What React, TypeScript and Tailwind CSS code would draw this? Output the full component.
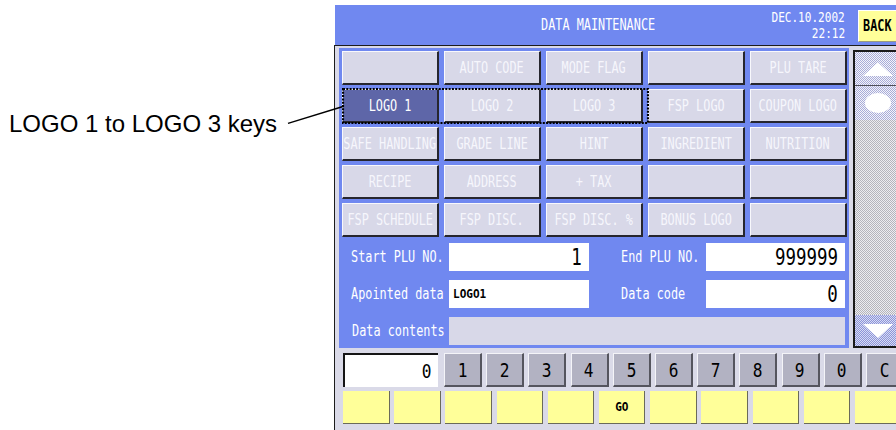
import React from "react";

const MONO = "font-['DejaVu_Sans_Mono',monospace]";

const rows: string[][] = [
  ["", "AUTO CODE", "MODE FLAG", "", "PLU TARE"],
  ["LOGO 1", "LOGO 2", "LOGO 3", "FSP LOGO", "COUPON LOGO"],
  ["SAFE HANDLING", "GRADE LINE", "HINT", "INGREDIENT", "NUTRITION"],
  ["RECIPE", "ADDRESS", "+ TAX", "", ""],
  ["FSP SCHEDULE", "FSP DISC.", "FSP DISC. %", "BONUS LOGO", ""],
];

function FuncKey({ label, selected }: { label: string; selected?: boolean }) {
  return (
    <div
      className={`h-[34px] flex items-center justify-center overflow-visible border-t border-l border-b-2 border-r-2 border-t-[#f8f8fc] border-l-[#f8f8fc] border-b-[#26262e] border-r-[#26262e] ${
        selected ? "bg-[#5e66a8] text-white" : "bg-[#d8d8e8] text-[#f6f6fc]"
      }`}
    >
      <span className={`${MONO} shrink-0 whitespace-nowrap inline-block scale-x-[0.79] origin-center text-[15px] leading-[16px]`}>
        {label}
      </span>
    </div>
  );
}

function Label({ text, pl }: { text: string; pl: string }) {
  return (
    <div className={`flex items-center ${pl}`}>
      <span className={`${MONO} whitespace-nowrap inline-block scale-x-[0.79] origin-left text-[15px] leading-[16px] text-white`}>
        {text}
      </span>
    </div>
  );
}

function NumField({ value }: { value: string }) {
  return (
    <div className="bg-white flex items-center justify-end pr-[7px] overflow-hidden">
      <span className={`${MONO} whitespace-nowrap inline-block scale-x-[0.76] origin-right text-[23px] leading-[24px] text-black`}>
        {value}
      </span>
    </div>
  );
}

const dither = (a: string, b: string) => ({
  backgroundImage: `repeating-conic-gradient(${a} 0% 25%, ${b} 0% 50%)`,
  backgroundSize: "2px 2px",
});

export default function App() {
  const keys = ["1", "2", "3", "4", "5", "6", "7", "8", "9", "0", "C"];
  const yellow = ["", "", "", "", "", "GO", "", "", "", "", ""];
  return (
    <div className="relative flex w-[896px] h-[430px] overflow-hidden bg-white">
      {/* annotation */}
      <div className="w-[334px] shrink-0 pt-[110px] pl-[9px]">
        <span className="font-['Liberation_Sans',Arial,sans-serif] text-[24px] leading-[28px] text-black whitespace-nowrap">
          LOGO 1 to LOGO 3 keys
        </span>
      </div>

      {/* device */}
      <div className="w-[562px] shrink-0 flex flex-col pt-[5px]">
        {/* header */}
        <div className="ml-[1px] h-[40px] shrink-0 bg-[#7088f0] flex items-center">
          <span className={`${MONO} ml-[206px] whitespace-nowrap inline-block scale-x-[0.79] origin-left text-[15px] leading-[16px] text-white`}>
            DATA MAINTENANCE
          </span>
          <div className="ml-auto flex flex-col items-end gap-[1px]">
            <span className={`${MONO} whitespace-nowrap inline-block scale-x-[0.79] origin-right text-[14px] leading-[15px] text-white`}>
              DEC.10.2002
            </span>
            <span className={`${MONO} whitespace-nowrap inline-block scale-x-[0.79] origin-right text-[14px] leading-[15px] text-white`}>
              22:12
            </span>
          </div>
          <div className="ml-[13px] mt-[2px] w-[38px] h-[32px] shrink-0 bg-[#ffff99] border-t border-l border-b border-t-white border-l-white border-b-[#9a9a80] flex items-center pl-[4px]">
            <span className={`${MONO} font-bold whitespace-nowrap inline-block scale-x-[0.74] origin-left text-[16px] leading-[16px] text-black`}>
              BACK
            </span>
          </div>
        </div>

        {/* body */}
        <div className="flex-1 border-l border-t border-[#1c1c1c] bg-[#dadae8] flex flex-col">
          <div className="flex pt-[2px] pl-[4px] shrink-0">
            {/* blue panel */}
            <div className="relative w-[510px] h-[300px] shrink-0 bg-[#7088f0] pt-[3px] pl-[3px] pr-[2px] flex flex-col">
              <div className="grid grid-cols-5 gap-x-[5px] gap-y-[4px]">
                {rows.flatMap((r, ri) =>
                  r.map((l, ci) => <FuncKey key={`${ri}-${ci}`} label={l} selected={ri === 1 && ci === 0} />)
                )}
              </div>
              <div className="mt-[6px] grid grid-cols-[107px_140px_117px_139px] auto-rows-[28px] gap-y-[9px]">
                <Label text="Start PLU NO." pl="pl-[9px]" />
                <NumField value="1" />
                <Label text="End PLU NO." pl="pl-[32px]" />
                <NumField value="999999" />

                <Label text="Apointed data" pl="pl-[9px]" />
                <div className="bg-white flex items-center pl-[4px]">
                  <span className={`${MONO} font-bold whitespace-nowrap inline-block scale-x-[0.85] origin-left text-[13px] leading-[14px] text-black`}>LOGO1</span>
                </div>
                <Label text="Data code" pl="pl-[32px]" />
                <NumField value="0" />

                <Label text="Data contents" pl="pl-[10px]" />
                <div className="col-span-3 bg-[#d8d8e8]" />
              </div>
              {/* focus rectangle over LOGO 1..3 */}
              <svg className="absolute left-[3px] top-[40px] pointer-events-none" width="307" height="36">
                <rect x="1" y="1" width="305" height="34" fill="none" stroke="black" strokeWidth="2.2" strokeDasharray="2 1.3" />
              </svg>
            </div>

            {/* scroll panel */}
            <div
              className="mt-[2px] ml-[4px] w-[48px] h-[298px] shrink-0 border-l-2 border-t-2 border-b-2 border-[#1a1a1a] flex flex-col"
              style={dither("#b4b4bc", "#ececf0")}
            >
              <div className="h-[34px] shrink-0 border-b border-[#50505a] flex items-center justify-center" style={dither("#a8acd8", "#f4f4fa")}>
                <svg width="32" height="16" viewBox="0 0 32 16">
                  <polygon points="16,1.5 31,15 1,15" fill="white" />
                </svg>
              </div>
              <div className="h-[34px] shrink-0 flex items-center justify-center" style={dither("#a8acd8", "#f4f4fa")}>
                <svg width="30" height="22" viewBox="0 0 30 22">
                  <ellipse cx="15" cy="11" rx="13" ry="10" fill="white" />
                </svg>
              </div>
              <div className="flex-1" />
              <div className="h-[31px] shrink-0 flex items-center justify-center" style={dither("#8c94d8", "#d8dcf4")}>
                <svg width="32" height="18" viewBox="0 0 32 18">
                  <polygon points="1,2 31,2 16,16" fill="white" />
                </svg>
              </div>
            </div>
          </div>

          {/* keypad row */}
          <div className="mt-[5px] pl-[8px] flex h-[34px] shrink-0">
            <div className="w-[95px] shrink-0 bg-white border-t-2 border-l-2 border-[#151515] flex items-center justify-end pr-[7px]">
              <span className={`${MONO} inline-block scale-x-[0.85] origin-right text-[19px] leading-[20px] text-black`}>0</span>
            </div>
            <div className="ml-[6px] flex gap-[4.2px]">
              {keys.map((k) => (
                <div
                  key={k}
                  className="w-[38px] h-[34px] shrink-0 bg-[#b2b2c2] border-t border-l border-b-2 border-r-2 border-t-[#f4f4f8] border-l-[#f4f4f8] border-b-[#55555e] border-r-[#55555e] flex items-center justify-center"
                >
                  <span className={`${MONO} inline-block scale-x-[0.85] text-[19px] leading-[20px] text-black`}>{k}</span>
                </div>
              ))}
            </div>
          </div>

          {/* yellow row */}
          <div className="mt-[4px] pl-[8px] flex gap-[4.7px] h-[33px] shrink-0">
            {yellow.map((y, i) => (
              <div
                key={i}
                className="w-[46.5px] h-[33px] shrink-0 bg-[#ffff99] border-b border-r border-[#6a6a5a] flex items-center justify-center"
              >
                <span className={`${MONO} font-bold inline-block scale-x-[0.85] text-[13px] leading-[14px] text-black`}>{y}</span>
              </div>
            ))}
          </div>
        </div>
      </div>

      {/* leader line */}
      <svg className="absolute left-0 top-0 pointer-events-none" width="896" height="430">
        <line x1="288" y1="123.4" x2="343" y2="106.5" stroke="black" strokeWidth="1.5" />
      </svg>
    </div>
  );
}
